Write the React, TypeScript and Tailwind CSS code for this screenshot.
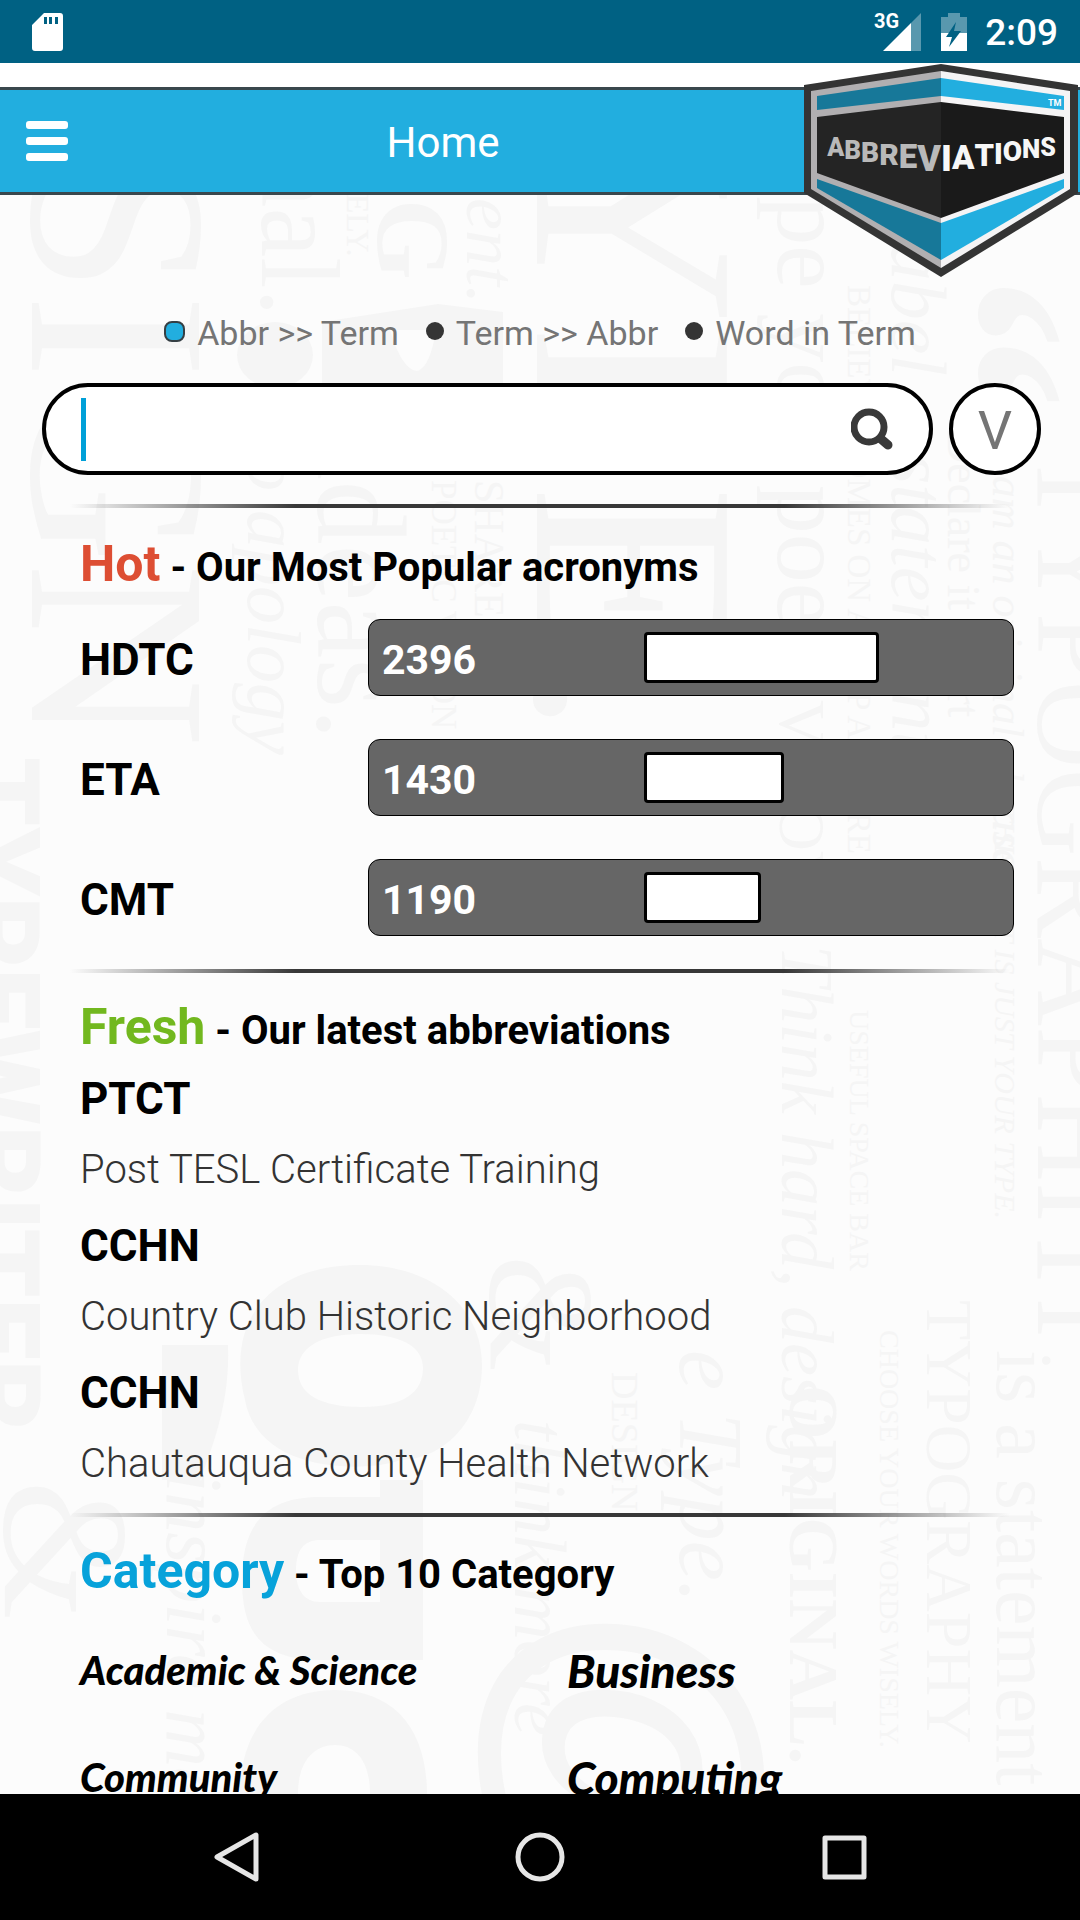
import React, { useState } from 'react';

const directions = ['Abbr >> Term', 'Term >> Abbr', 'Word in Term'];

const popular = [
  { name: 'HDTC', count: 2396 },
  { name: 'ETA', count: 1430 },
  { name: 'CMT', count: 1190 },
];

const latest = [
  { name: 'PTCT', term: 'Post TESL Certificate Training' },
  { name: 'CCHN', term: 'Country Club Historic Neighborhood' },
  { name: 'CCHN', term: 'Chautauqua County Health Network' },
];

const categories = ['Academic & Science', 'Business', 'Community', 'Computing'];

const FULL_BAR = 3760;

// The word grows towards the ridge of the badge, on both faces
const logoLeft = [
  { char: 'A', size: 25, dy: 0 },
  { char: 'B', size: 26, dy: 3 },
  { char: 'B', size: 28, dy: 3 },
  { char: 'R', size: 30, dy: 3 },
  { char: 'E', size: 33, dy: 3 },
  { char: 'V', size: 36, dy: 3 },
];

const logoRight = [
  { char: 'I', size: 36, dy: 0 },
  { char: 'A', size: 33, dy: -2 },
  { char: 'T', size: 31, dy: -3 },
  { char: 'I', size: 29, dy: -2 },
  { char: 'O', size: 28, dy: -3 },
  { char: 'N', size: 26, dy: -3 },
  { char: 'S', size: 25, dy: -2 },
];

// Vertical lettering of the wallpaper: x is the baseline, y where the line starts
const lettering = [
  { text: 'SIGN', x: 32, y: 152, size: 255 },
  { text: 'original.', x: 262, y: -60, size: 112 },
  { text: 'WISELY.', x: 347, y: 135, size: 32 },
  { text: 'TYPOG', x: 378, y: -90, size: 104, bold: true },
  { text: 'statement.', x: 467, y: 10, size: 72, italic: true },
  { text: 'YPE.', x: 537, y: 115, size: 290 },
  { text: 'no apology', x: 248, y: 415, size: 76, italic: true },
  { text: 'ideas.', x: 318, y: 445, size: 128 },
  { text: 'POETIC VISION', x: 432, y: 480, size: 35 },
  { text: 'SHARE A', x: 475, y: 480, size: 42 },
  { text: 'type you poet', x: 778, y: 120, size: 98 },
  { text: 'V LOVE', x: 780, y: 700, size: 66 },
  { text: 'BELIEVE HOMES ON A MAP A SHARE', x: 848, y: 285, size: 33 },
  { text: 'label a statement', x: 892, y: 220, size: 78, italic: true },
  { text: 'Declare it to art', x: 948, y: 430, size: 46 },
  { text: 'I am an original phrase', x: 993, y: 450, size: 44, italic: true },
  { text: 'THIS TEST IS JUST YOUR TYPE.', x: 995, y: 805, size: 30, italic: true },
  { text: 'TYPOGRAPHITI', x: 1038, y: 450, size: 122 },
  { text: 'Think hard, design', x: 782, y: 945, size: 74, italic: true },
  { text: 'USEFUL SPACE BAR', x: 850, y: 1010, size: 28 },
  { text: '\u201C', x: 880, y: 275, size: 270, bold: true },
  { text: 'e Type.', x: 680, y: 1350, size: 90, italic: true },
  { text: 'think more', x: 515, y: 1420, size: 74, italic: true },
  { text: 'DESIGN', x: 612, y: 1372, size: 38 },
  { text: 'ORIGINAL.', x: 790, y: 1385, size: 70, bold: true },
  { text: 'CHOOSE YOUR WORDS WISELY.', x: 880, y: 1330, size: 28 },
  { text: 'TYPOGRAPHY', x: 927, y: 1300, size: 66 },
  { text: 'is a statement', x: 997, y: 1350, size: 80 },
  { text: 'inspire me', x: 167, y: 1470, size: 80, italic: true },
  { text: '&', x: 5, y: 1480, size: 180 },
  { text: '&', x: 490, y: 1255, size: 150 },
];

function Wallpaper() {
  return (
    <svg
      aria-hidden="true"
      className="absolute inset-0 h-full w-full"
      viewBox="0 195 1080 1599"
      preserveAspectRatio="xMinYMin slice"
      fill="#f5f5f5"
    >
      {lettering.map((line) => (
        <text
          key={`${line.x}-${line.y}`}
          transform={`translate(${line.x} ${line.y}) rotate(90)`}
          fontFamily="'Liberation Serif', serif"
          fontSize={line.size}
          fontWeight={line.bold ? 700 : 400}
          fontStyle={line.italic ? 'italic' : 'normal'}
        >
          {line.text}
        </text>
      ))}
      <text transform="translate(-38 757) rotate(90)" fontFamily="Roboto, sans-serif" fontSize="110" fontWeight="900">
        TYPEWRITER
      </text>
      <text transform="translate(530 1605) rotate(90)" fontFamily="'Liberation Sans', sans-serif" fontSize="330" fontWeight="700">
        @
      </text>
      <ellipse cx="275" cy="355" rx="38" ry="33" />
      <path d="M322 322L438 304L503 312V385H322V322ZM390 330Q402 370 417 371Q430 368 436 330Z" fillRule="evenodd" />
      <g fillRule="evenodd">
        <path d="M360 1265C430 1265 482 1305 482 1365C482 1425 440 1460 400 1460C380 1470 260 1480 245 1400C225 1320 270 1265 360 1265ZM360 1334C320 1334 298 1348 298 1370C298 1394 320 1407 362 1407C404 1407 423 1392 423 1368C423 1346 400 1334 360 1334Z" />
        <path d="M423 1480V1660H320C260 1660 242 1630 242 1580C242 1520 270 1497 320 1497H380V1480ZM380 1540H320C304 1540 296 1550 296 1570C296 1590 304 1602 320 1602H380Z" />
        <path d="M335 1690C395 1690 427 1730 427 1794H240C240 1730 275 1690 335 1690ZM335 1745C315 1745 298 1760 298 1794H370C370 1760 355 1745 335 1745Z" />
      </g>
      <path d="M162 1345H228C230 1400 215 1440 200 1480H162Z" />
    </svg>
  );
}

function Logo() {
  return (
    <svg aria-label="Abbreviations" role="img" className="h-[220px] w-[280px]" viewBox="800 60 280 220">
      <path d="M941 64L1078 85V193L941 277L804 193V85Z" fill="#343434" />
      <path d="M941 71V268L811 189V91Z" fill="#b1afb1" />
      <path d="M941 71V268L1070 189V91Z" fill="#f5f4f5" />
      <path d="M941 78V96L817 110V96Z" fill="#177899" />
      <path d="M941 78V96L1064 110V96Z" fill="#22aedf" />
      <path d="M941 102V218L817 173V117Z" fill="#242424" />
      <path d="M941 102V218L1064 173V117Z" fill="#1a1a1a" />
      <path d="M941 223V260L817 188V179Z" fill="#177899" />
      <path d="M941 223V260L1064 188V179Z" fill="#22aedf" />
      <text x="1048" y="106" fontFamily="Roboto, sans-serif" fontWeight="700" fontSize="9" fill="#ffffff">
        TM
      </text>
      <g fontFamily="Roboto, sans-serif" fontWeight="900">
        <text x="941" y="156" textAnchor="end" fill="#b9b9b9">
          {logoLeft.map((letter, i) => (
            <tspan key={i} fontSize={letter.size} dy={letter.dy}>
              {letter.char}
            </tspan>
          ))}
        </text>
        <text x="941" y="171" fill="#f7f7f7">
          {logoRight.map((letter, i) => (
            <tspan key={i} fontSize={letter.size} dy={letter.dy}>
              {letter.char}
            </tspan>
          ))}
        </text>
      </g>
    </svg>
  );
}

function Divider() {
  return <div className="mx-[70px] h-1 bg-[linear-gradient(to_right,transparent,#383838_24%,#383838_76%,transparent)]" />;
}

function SectionHeading({ title, subtitle, color }: { title: string; subtitle: string; color: string }) {
  return (
    <h2 className="mt-[22px] px-20 text-[40px] leading-[64px] font-bold text-black">
      <span className={`text-[50px] ${color}`}>{title}</span> - {subtitle}
    </h2>
  );
}

function StatusBar() {
  return (
    <div className="flex h-[63px] shrink-0 items-center justify-between bg-[#006183] pr-[22px] pl-8 text-white">
      <svg className="h-10 w-8" viewBox="0 0 32 40" fill="currentColor">
        <path
          fillRule="evenodd"
          d="M12 1H28Q31 1 31 4V36Q31 39 28 39H3Q0 39 0 36V13ZM12 5V12H15V5ZM17 5V12H20V5ZM23 5V12H26V5Z"
        />
      </svg>
      <div className="flex items-center">
        <span className="self-start text-xl leading-6 font-bold">3G</span>
        <svg className="-ml-4 h-[38px] w-[38px]" viewBox="0 0 38 38" fill="currentColor">
          <path d="M38 0V38H28V10Z" opacity="0.35" />
          <path d="M28 10V38H0Z" />
        </svg>
        <svg className="ml-5 h-[38px] w-[26px]" viewBox="0 0 26 38" fill="currentColor">
          <path d="M7 0H19V4H26V20H0V4H7Z" opacity="0.35" />
          <path d="M0 20H26V38H0Z" />
          <path d="M15 9L5 24H11L8 34L20 18H13Z" fill="#006183" />
        </svg>
        <span className="ml-[18px] pt-0.5 text-[37px] leading-[44px] font-medium">2:09</span>
      </div>
    </div>
  );
}

function App() {
  const [direction, setDirection] = useState(directions[0]);

  return (
    <div className="flex h-screen flex-col overflow-hidden bg-white font-[Roboto,sans-serif]">
      <StatusBar />

      <header className="relative z-10 mt-6 flex h-[108px] shrink-0 items-center border-y-3 border-[#39474d] bg-[#22aedf] pr-[276px]">
        <button type="button" aria-label="Menu" className="flex w-[82px] flex-col gap-2 py-4 pl-[26px]">
          <span className="h-2 w-[42px] rounded-[3px] bg-white" />
          <span className="h-2 w-[42px] rounded-[3px] bg-white" />
          <span className="h-2 w-[42px] rounded-[3px] bg-white" />
        </button>
        <h1 className="flex-1 pt-1 text-center text-[42px] leading-[52px] text-white">Home</h1>
        <div className="absolute -top-[30px] right-0">
          <Logo />
        </div>
      </header>

      <main className="relative flex-1 overflow-hidden bg-[#fcfcfc]">
        <Wallpaper />

        <div className="relative pt-[118px]">
          <fieldset className="flex justify-center gap-[27px] text-[34px] leading-10 text-[#757575]">
            {directions.map((item) => (
              <label key={item} className="flex items-center gap-3">
                <input
                  type="radio"
                  name="direction"
                  checked={direction === item}
                  onChange={() => setDirection(item)}
                  className="mb-1 size-[18px] appearance-none rounded-full bg-[#353535] checked:size-[21px] checked:rounded-lg checked:border-2 checked:border-[#353f44] checked:bg-[#22aedf]"
                />
                {item}
              </label>
            ))}
          </fieldset>

          <form className="mt-[30px] mb-[29px] flex gap-4 pr-[39px] pl-[42px]" onSubmit={(e) => e.preventDefault()}>
            <div className="flex h-[92px] flex-1 items-center rounded-full border-4 border-black bg-white pr-9 pl-[35px]">
              <span className="h-[63px] w-[5px] bg-[#00a0d8]" />
              <input aria-label="Search" type="text" className="h-full flex-1 pl-2 text-[42px] outline-none" />
              <button type="submit" aria-label="Search" className="size-[42px]">
                <svg viewBox="0 0 42 42" fill="none" stroke="#393939" strokeLinecap="round">
                  <circle cx="18" cy="19" r="15" strokeWidth="7" />
                  <path d="M30 31L37 37" strokeWidth="9" />
                </svg>
              </button>
            </div>
            <button
              type="button"
              aria-label="Options"
              className="size-[92px] rounded-full border-4 border-black bg-white pt-1 text-[54px] leading-none text-[#757575]"
            >
              V
            </button>
          </form>

          <Divider />

          <section className="pt-0.5">
            <SectionHeading title="Hot" subtitle="Our Most Popular acronyms" color="text-[#dd4e33]" />
            <ul className="mt-[19px] mb-[33px] flex flex-col gap-[43px] pr-[66px] pl-20">
              {popular.map((item) => (
                <li key={item.name} className="flex items-center">
                  <span className="w-72 pt-1 text-[44px] leading-[72px] font-bold">{item.name}</span>
                  <div className="flex h-[77px] flex-1 rounded-xl border border-black bg-[#666666]">
                    <span className="w-[275px] pl-[13px] text-[41px] leading-[80px] font-bold text-white">{item.count}</span>
                    <div className="flex-1 pt-3">
                      <div
                        className="h-[51px] rounded-[4px] border-3 border-black bg-white"
                        style={{ width: `${(item.count / FULL_BAR) * 100}%` }}
                      />
                    </div>
                  </div>
                </li>
              ))}
            </ul>
          </section>

          <Divider />

          <section>
            <SectionHeading title="Fresh" subtitle="Our latest abbreviations" color="text-[#72b81f]" />
            <dl className="mb-[14px] flex flex-col gap-[5px] px-20">
              {latest.map((item) => (
                <div key={item.term}>
                  <dt className="text-[44px] leading-[72px] font-bold">{item.name}</dt>
                  <dd className="text-[40px] leading-[70px] font-light text-[#333333]">{item.term}</dd>
                </div>
              ))}
            </dl>
          </section>

          <Divider />

          <section>
            <SectionHeading title="Category" subtitle="Top 10 Category" color="text-[#07a2da]" />
            <div className="mt-[10px] grid grid-cols-2 pr-[26px] pl-20 font-[Lato,sans-serif] text-[40px] leading-[107px] font-black italic">
              {categories.map((item) => (
                <a key={item} href="#" className="even:text-[46px]">
                  {item}
                </a>
              ))}
            </div>
          </section>
        </div>
      </main>

      <nav className="z-10 grid h-[126px] shrink-0 grid-cols-[1fr_244px_360px_244px_1fr] items-center bg-black text-[#e6e6e6]">
        <button type="button" aria-label="Back" className="col-start-2 ml-[97px] size-[52px]">
          <svg viewBox="0 0 52 52" fill="none" stroke="currentColor" strokeWidth="5" strokeLinejoin="round">
            <path d="M4 26L43 4V48Z" />
          </svg>
        </button>
        <button type="button" aria-label="Home" className="mx-auto size-[52px]">
          <svg viewBox="0 0 52 52" fill="none" stroke="currentColor" strokeWidth="5">
            <circle cx="26" cy="26" r="22" />
          </svg>
        </button>
        <button type="button" aria-label="Recent apps" className="mr-[94px] size-[52px] justify-self-end">
          <svg viewBox="0 0 52 52" fill="none" stroke="currentColor" strokeWidth="5" strokeLinejoin="round">
            <rect x="7" y="7" width="39" height="39" />
          </svg>
        </button>
      </nav>
    </div>
  );
}

export default App;
